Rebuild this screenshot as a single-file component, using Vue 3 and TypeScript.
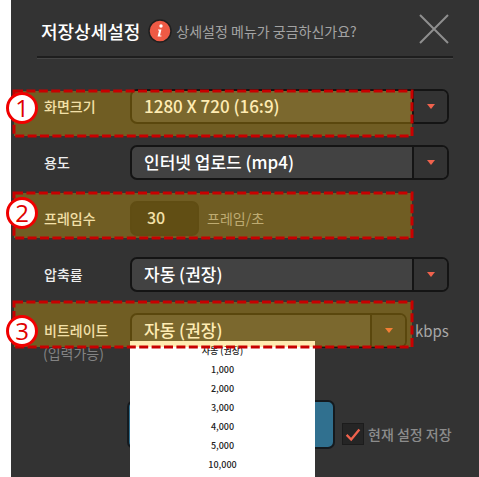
<script setup lang="ts">
import { ref } from 'vue'

const screenSize = ref('1280 X 720 (16:9)')
const purpose = ref('인터넷 업로드 (mp4)')
const frames = ref('30')
const compression = ref('자동 (권장)')
const bitrate = ref('자동 (권장)')
const keepSettings = ref(true)
const bitrates: string[] = ['자동 (권장)', '1,000', '2,000', '3,000', '4,000', '5,000', '10,000']
</script>

<template>
  <main class="panel">
    <header class="header">
      <h1 class="title">저장상세설정</h1>
      <svg class="info" viewBox="0 0 24 24" aria-hidden="true">
        <circle cx="12" cy="12" r="11" fill="#ee5a45" stroke="#1f1f1f" stroke-width="1.5" />
        <circle cx="13" cy="7" r="1.7" fill="#fff" />
        <path d="M10 10.5h3.4L12 16.4h1.4v1H9.6l1.5-6H10z" fill="#fff" />
      </svg>
      <a class="help" href="#help">상세설정 메뉴가 궁금하신가요?</a>
      <button class="close" type="button" aria-label="닫기">
        <svg viewBox="0 0 30 30"><path d="M1 1L29 29M29 1L1 29" stroke="#8f8f8f" stroke-width="2" /></svg>
      </button>
    </header>

    <form class="rows" @submit.prevent>
      <div class="row">
        <label class="label" for="size">화면크기</label>
        <div class="combo">
          <select id="size" v-model="screenSize" class="value"><option>1280 X 720 (16:9)</option></select>
          <span class="arrow"><svg viewBox="0 0 8 5"><path d="M0 0h8L4 5z" /></svg></span>
        </div>
        <div class="mark mark-size">
          <svg class="frame"><rect width="100%" height="100%" /></svg>
          <span class="number">1</span>
        </div>
      </div>

      <div class="row">
        <label class="label" for="purpose">용도</label>
        <div class="combo">
          <select id="purpose" v-model="purpose" class="value"><option>인터넷 업로드 (mp4)</option></select>
          <span class="arrow"><svg viewBox="0 0 8 5"><path d="M0 0h8L4 5z" /></svg></span>
        </div>
      </div>

      <div class="row">
        <label class="label" for="frames">프레임수</label>
        <input id="frames" v-model="frames" class="frames" type="text" />
        <span class="unit">프레임/초</span>
        <div class="mark mark-frames">
          <svg class="frame"><rect width="100%" height="100%" /></svg>
          <span class="number">2</span>
        </div>
      </div>

      <div class="row">
        <label class="label" for="compression">압축률</label>
        <div class="combo">
          <select id="compression" v-model="compression" class="value"><option>자동 (권장)</option></select>
          <span class="arrow"><svg viewBox="0 0 8 5"><path d="M0 0h8L4 5z" /></svg></span>
        </div>
      </div>

      <div class="row">
        <label class="label" for="bitrate">비트레이트</label>
        <div class="combo">
          <input id="bitrate" v-model="bitrate" class="value" type="text" />
          <button class="arrow" type="button" aria-label="비트레이트 목록"><svg viewBox="0 0 8 5"><path d="M0 0h8L4 5z" /></svg></button>
          <ul class="menu">
            <li v-for="item in bitrates" :key="item">{{ item }}</li>
          </ul>
        </div>
        <span class="kbps">kbps</span>
        <div class="mark mark-bitrate">
          <svg class="frame"><rect width="100%" height="100%" /></svg>
          <span class="number">3</span>
        </div>
      </div>
    </form>
    <p class="note">(입력가능)</p>

    <footer class="footer">
      <button class="confirm" type="button" aria-label="확인"></button>
      <label class="keep">
        <input v-model="keepSettings" type="checkbox" class="keep-input" />
        <span class="box"><svg v-if="keepSettings" viewBox="0 0 22 22"><path d="M4 12L9 17L18 6" /></svg></span>
        현재 설정 저장
      </label>
    </footer>
  </main>
</template>

<style>
body {
  background: #fff;
}
</style>

<style scoped>
* {
  box-sizing: border-box;
}
.panel {
  min-height: 100vh;
  margin-left: 11px;
  padding: 0 30px 0 32px;
  background: #333;
  color: #eee;
  font-family: "Noto Sans CJK KR", sans-serif;
  font-size: 14px;
  font-weight: 500;
}
button,
input,
select {
  margin: 0;
  padding: 0;
  border: 0;
  border-radius: 0;
  background: none;
  color: inherit;
  font: inherit;
  appearance: none;
}
.header {
  display: flex;
  align-items: center;
  height: 59px;
  margin: 0 -4px 0 -6px;
  padding: 4px 4px 0;
  border-bottom: 1px solid #454545;
  box-shadow: inset 0 -2px #1e1e1e;
}
.title {
  margin: 0;
  font-size: 18px;
  font-weight: 500;
  color: #fff;
}
.info {
  width: 24px;
  height: 24px;
  margin: 0 4px 0 8px;
}
.help {
  color: #a3a3a3;
  font-weight: 400;
  text-decoration: none;
  white-space: nowrap;
}
.close {
  width: 30px;
  height: 30px;
  margin-left: auto;
  margin-bottom: 4px;
}
.close svg {
  display: block;
}
.rows {
  display: grid;
  gap: 21px;
  padding-top: 30px;
}
.row {
  position: relative;
  display: flex;
  align-items: center;
  height: 35px;
}
.label {
  flex: none;
  width: 87px;
  padding: 0 1px 2px;
}
.combo {
  position: relative;
  display: flex;
  flex: 1;
  min-width: 0;
  height: 35px;
  border: 2px solid #141414;
  border-radius: 7px;
  background: #424242;
}
.value {
  flex: 1;
  min-width: 0;
  padding: 0 12px 3px;
  font-size: 17px;
  color: #fff;
}
.arrow {
  display: grid;
  flex: none;
  place-items: center;
  width: 35px;
  border-left: 2px solid #141414;
  border-radius: 0 5px 5px 0;
  background: #333;
}
.arrow svg {
  width: 8px;
  height: 5px;
  fill: #f0624d;
}
.frames {
  width: 69px;
  height: 35px;
  padding: 0 15px 3px;
  border: 2px solid #1c1c1c;
  border-radius: 7px;
  background: #1e1e1e;
  font-size: 16px;
}
.unit {
  margin-left: 8px;
  padding-bottom: 2px;
  color: #a3a3a3;
  font-weight: 400;
}
.kbps {
  width: 42px;
  padding-left: 8px;
  color: #a8a8a8;
  font-size: 15px;
  font-weight: 400;
}
.menu {
  position: absolute;
  z-index: 1;
  top: 26px;
  left: -2px;
  width: 185px;
  margin: 0;
  padding: 0 0 3px;
  background: #fff;
  color: #222;
  font-size: 9px;
  line-height: 19px;
  text-align: center;
  list-style: none;
}
.mark {
  position: absolute;
  z-index: 2;
  left: -29px;
  right: 37px;
  height: 45px;
  background: rgba(255, 192, 0, 0.3);
  pointer-events: none;
}
.mark-size {
  top: 2px;
}
.mark-frames {
  top: -8px;
}
.mark-bitrate {
  top: -11px;
}
.frame {
  display: block;
  width: 100%;
  height: 100%;
  overflow: visible;
}
.frame rect {
  fill: none;
  stroke: #c80000;
  stroke-width: 3;
  stroke-dasharray: 9 3.4;
}
.number {
  position: absolute;
  left: -8px;
  display: grid;
  place-items: center;
  width: 32px;
  height: 32px;
  border: 3px solid #f00000;
  border-radius: 50%;
  background: #fff;
  color: #e00000;
  font-family: "Open Sans", sans-serif;
  font-size: 24px;
  font-weight: 400;
  line-height: 26px;
}
.mark-size .number {
  top: 1px;
}
.mark-frames .number {
  top: 4px;
}
.mark-bitrate .number {
  top: 13px;
}
.note {
  margin: -4px 0 0;
  color: #838383;
  font-size: 14px;
  font-weight: 400;
  line-height: 18px;
}
.footer {
  display: flex;
  align-items: flex-start;
  padding: 38px 0 0 84px;
}
.confirm {
  width: 208px;
  height: 49px;
  border: 2px solid #151a1e;
  border-radius: 7px;
  background: #30708f;
}
.keep {
  position: relative;
  display: flex;
  flex: none;
  align-items: center;
  gap: 4px;
  height: 22px;
  margin: 23px -10px 0 7px;
  color: #8c8c8c;
  font-size: 14px;
  white-space: nowrap;
}
.keep-input {
  position: absolute;
  width: 22px;
  height: 22px;
  opacity: 0;
}
.box {
  width: 22px;
  height: 22px;
  border: 1px solid #1c1c1c;
  background: #252525;
}
.box svg {
  display: block;
  fill: none;
  stroke: #f0624d;
  stroke-width: 2.5;
}
</style>
